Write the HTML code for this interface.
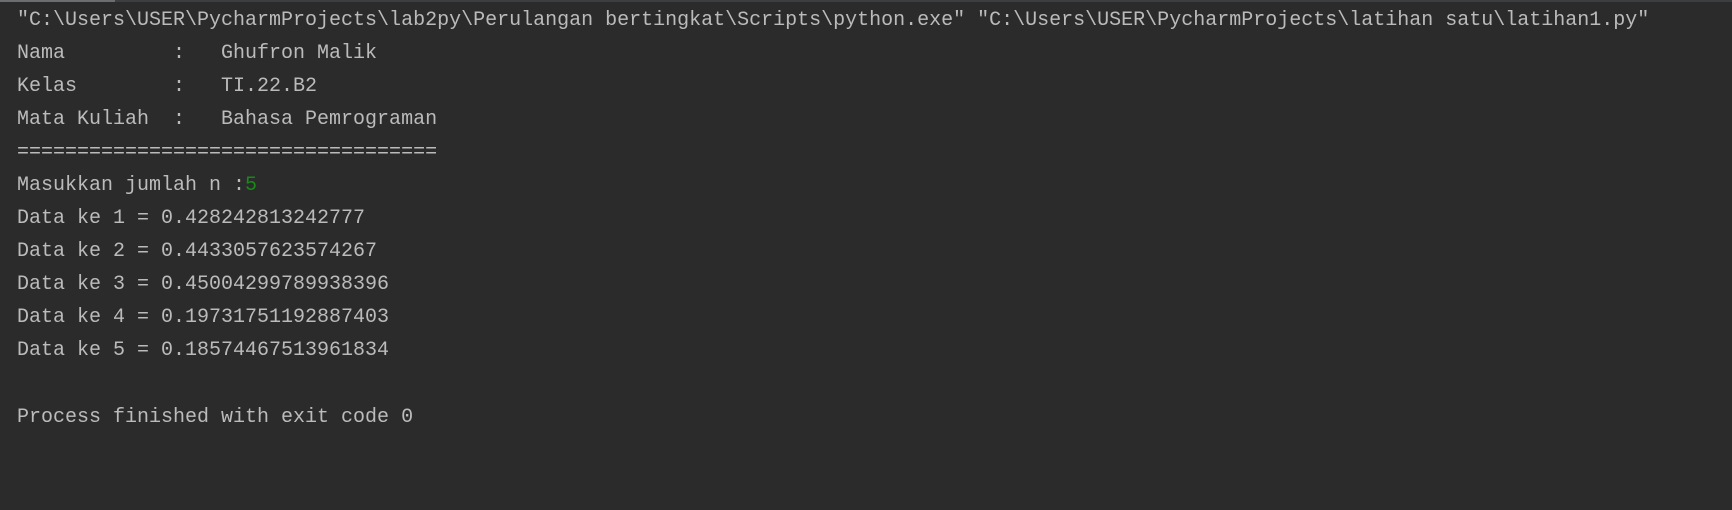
<!DOCTYPE html>
<html><head><meta charset="utf-8"><style>
html,body{margin:0;padding:0;width:1732px;height:510px;background:#2b2b2b;overflow:hidden}
.bar{position:absolute;top:0;left:0;width:1732px;height:2px;background:#3c3f41}
.bar i{position:absolute;left:0;top:0;width:115px;height:2px;background:#6b6e70}
pre{position:absolute;left:17px;top:3.5px;margin:0;font-family:"Liberation Mono","DejaVu Sans Mono",monospace;font-size:20px;line-height:33.1px;color:#bbbbbb;letter-spacing:0}
.g{color:#178a17}
</style></head><body>
<div class="bar"><i></i></div>
<pre>"C:\Users\USER\PycharmProjects\lab2py\Perulangan bertingkat\Scripts\python.exe" "C:\Users\USER\PycharmProjects\latihan satu\latihan1.py"
Nama         :   Ghufron Malik
Kelas        :   TI.22.B2
Mata Kuliah  :   Bahasa Pemrograman
===================================
Masukkan jumlah n :<span class="g">5</span>
Data ke 1 = 0.428242813242777
Data ke 2 = 0.4433057623574267
Data ke 3 = 0.45004299789938396
Data ke 4 = 0.19731751192887403
Data ke 5 = 0.18574467513961834

Process finished with exit code 0</pre>
</body></html>
